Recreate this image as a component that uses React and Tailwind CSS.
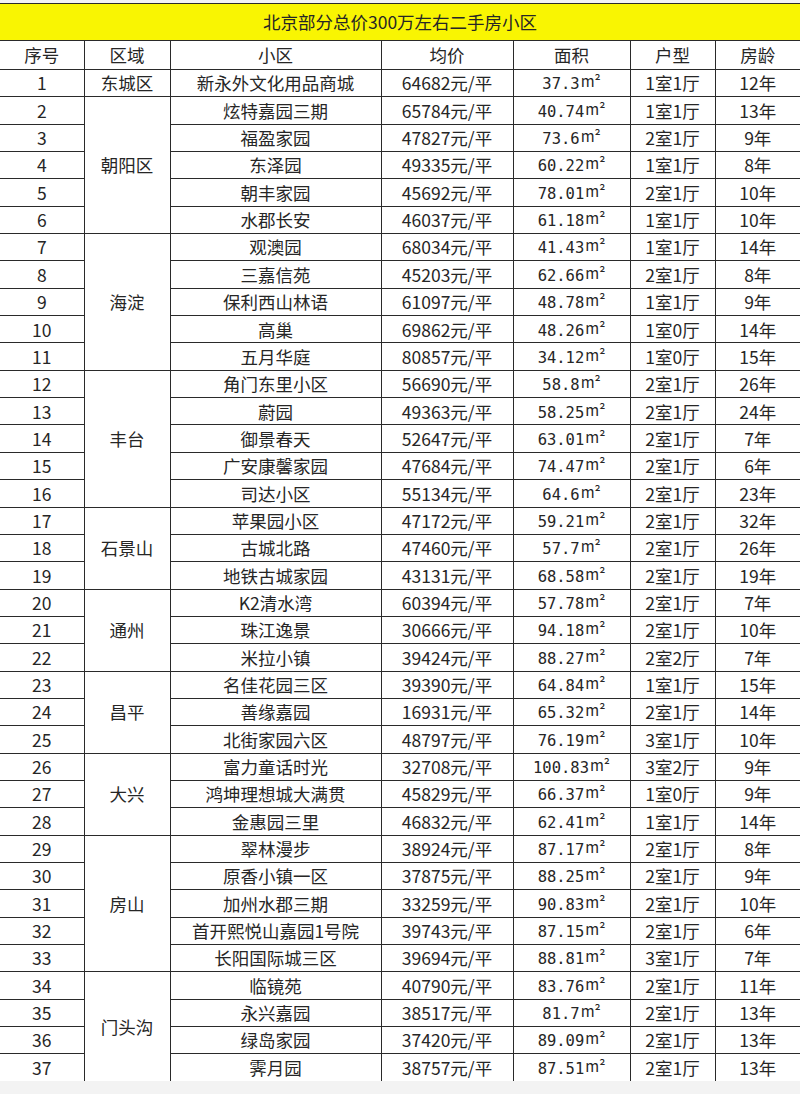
import React from "react";

const data = [
  ["1", "新永外文化用品商城", "64682", "37.3", "1室1厅", "12年"],
  ["2", "炫特嘉园三期", "65784", "40.74", "1室1厅", "13年"],
  ["3", "福盈家园", "47827", "73.6", "2室1厅", "9年"],
  ["4", "东泽园", "49335", "60.22", "1室1厅", "8年"],
  ["5", "朝丰家园", "45692", "78.01", "2室1厅", "10年"],
  ["6", "水郡长安", "46037", "61.18", "1室1厅", "10年"],
  ["7", "观澳园", "68034", "41.43", "1室1厅", "14年"],
  ["8", "三嘉信苑", "45203", "62.66", "2室1厅", "8年"],
  ["9", "保利西山林语", "61097", "48.78", "1室1厅", "9年"],
  ["10", "高巢", "69862", "48.26", "1室0厅", "14年"],
  ["11", "五月华庭", "80857", "34.12", "1室0厅", "15年"],
  ["12", "角门东里小区", "56690", "58.8", "2室1厅", "26年"],
  ["13", "蔚园", "49363", "58.25", "2室1厅", "24年"],
  ["14", "御景春天", "52647", "63.01", "2室1厅", "7年"],
  ["15", "广安康馨家园", "47684", "74.47", "2室1厅", "6年"],
  ["16", "司达小区", "55134", "64.6", "2室1厅", "23年"],
  ["17", "苹果园小区", "47172", "59.21", "2室1厅", "32年"],
  ["18", "古城北路", "47460", "57.7", "2室1厅", "26年"],
  ["19", "地铁古城家园", "43131", "68.58", "2室1厅", "19年"],
  ["20", "K2清水湾", "60394", "57.78", "2室1厅", "7年"],
  ["21", "珠江逸景", "30666", "94.18", "2室1厅", "10年"],
  ["22", "米拉小镇", "39424", "88.27", "2室2厅", "7年"],
  ["23", "名佳花园三区", "39390", "64.84", "1室1厅", "15年"],
  ["24", "善缘嘉园", "16931", "65.32", "2室1厅", "14年"],
  ["25", "北街家园六区", "48797", "76.19", "3室1厅", "10年"],
  ["26", "富力童话时光", "32708", "100.83", "3室2厅", "9年"],
  ["27", "鸿坤理想城大满贯", "45829", "66.37", "1室0厅", "9年"],
  ["28", "金惠园三里", "46832", "62.41", "1室1厅", "14年"],
  ["29", "翠林漫步", "38924", "87.17", "2室1厅", "8年"],
  ["30", "原香小镇一区", "37875", "88.25", "2室1厅", "9年"],
  ["31", "加州水郡三期", "33259", "90.83", "2室1厅", "10年"],
  ["32", "首开熙悦山嘉园1号院", "39743", "87.15", "2室1厅", "6年"],
  ["33", "长阳国际城三区", "39694", "88.81", "3室1厅", "7年"],
  ["34", "临镜苑", "40790", "83.76", "2室1厅", "11年"],
  ["35", "永兴嘉园", "38517", "81.7", "2室1厅", "13年"],
  ["36", "绿岛家园", "37420", "89.09", "2室1厅", "13年"],
  ["37", "霁月园", "38757", "87.51", "2室1厅", "13年"],
];

const districts = [
  ["东城区", 1],
  ["朝阳区", 5],
  ["海淀", 5],
  ["丰台", 5],
  ["石景山", 3],
  ["通州", 3],
  ["昌平", 3],
  ["大兴", 3],
  ["房山", 5],
  ["门头沟", 4],
];

const starts = {};
{
  let i = 0;
  districts.forEach(([name, span]) => {
    starts[i] = [name, span];
    i += span;
  });
}

const CJK = { fontFamily: '"Noto Sans CJK SC", sans-serif' };
const MONO = { fontFamily: '"DejaVu Sans Mono", "Noto Sans CJK SC", monospace' };

export default function App() {
  const last = data.length - 1;
  return (
    <div className="w-[800px] min-h-[1094px] bg-[#f3f3f3] pt-[3px]" style={CJK}>
      <table className="w-[800px] table-fixed border-collapse bg-white text-[17.5px] leading-none text-[#262626]">
        <colgroup>
          <col className="w-[84px]" />
          <col className="w-[86px]" />
          <col className="w-[211px]" />
          <col className="w-[132px]" />
          <col className="w-[117px]" />
          <col className="w-[85px]" />
          <col className="w-[85px]" />
        </colgroup>
        <thead>
          <tr className="h-[37px]">
            <th
              colSpan={7}
              className="border-t border-b border-[#2a2a2a] bg-[#f9f502] font-normal text-center"
            >
              北京部分总价300万左右二手房小区
            </th>
          </tr>
          <tr className="h-[29px]">
            {["序号", "区域", "小区", "均价", "面积", "户型", "房龄"].map((h, i) => (
              <th
                key={h}
                className={`border-b border-[#2a2a2a] font-normal text-center ${i < 6 ? "border-r" : ""}`}
              >
                {h}
              </th>
            ))}
          </tr>
        </thead>
        <tbody>
          {data.map((r, idx) => {
            const bb = idx < last ? "border-b" : "";
            const d = starts[idx];
            return (
              <tr key={idx} className="h-[27.35px]">
                <td className={`border-r ${bb} border-[#2a2a2a] text-center`}>{r[0]}</td>
                {d && (
                  <td
                    rowSpan={d[1]}
                    className={`border-r ${idx + d[1] - 1 < last ? "border-b" : ""} border-[#2a2a2a] text-center`}
                  >
                    {d[0]}
                  </td>
                )}
                <td className={`border-r ${bb} border-[#2a2a2a] text-center whitespace-nowrap`}>
                  {r[1]}
                </td>
                <td className={`border-r ${bb} border-[#2a2a2a] text-center whitespace-nowrap`}>
                  {r[2]}元/平
                </td>
                <td className={`border-r ${bb} border-[#2a2a2a] text-center whitespace-nowrap`}>
                  <span className="text-[15.5px]" style={MONO}>
                    {r[3]}
                  </span>
                  <span className="relative -top-[2px] ml-[1px] text-[15px]">m²</span>
                </td>
                <td className={`border-r ${bb} border-[#2a2a2a] text-center whitespace-nowrap`}>
                  {r[4]}
                </td>
                <td className={`${bb} border-[#2a2a2a] text-center whitespace-nowrap`}>{r[5]}</td>
              </tr>
            );
          })}
        </tbody>
      </table>
    </div>
  );
}
